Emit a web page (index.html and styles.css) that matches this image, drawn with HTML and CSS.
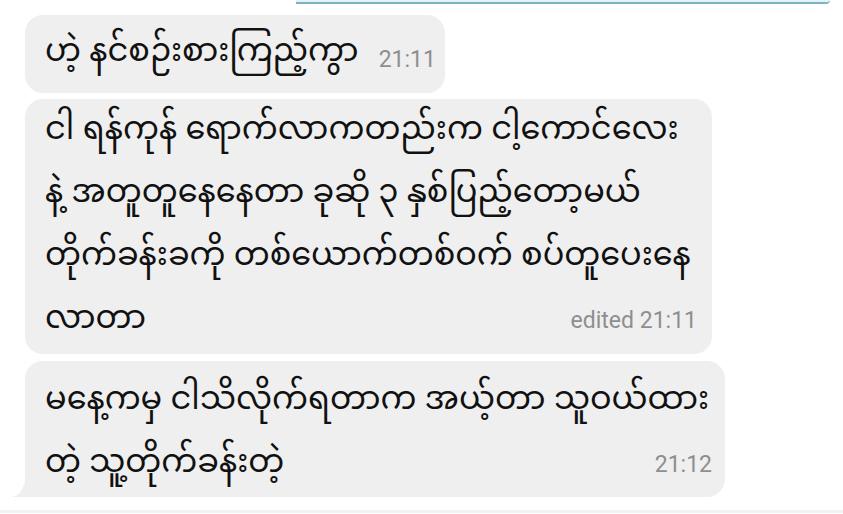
FILE: index.html
```html
<!DOCTYPE html>
<html lang="my">

<head>
    <meta charset="UTF-8">
    <meta name="viewport" content="width=device-width, initial-scale=1.0">
    <title>Chat</title>
    <link rel="stylesheet" href="styles.css">
</head>

<body>
    <div class="chat">
        <div class="sent-edge"></div>

        <div class="bubble short">
            <span class="text">ဟဲ့ နင်စဉ်းစားကြည့်ကွာ</span>
            <span class="time">21:11</span>
        </div>

        <div class="bubble long">
            ငါ ရန်ကုန် ရောက်လာကတည်းက ငါ့ကောင်လေး<br>
            နဲ့ အတူတူနေနေတာ ခုဆို ၃ နှစ်ပြည့်တော့မယ်<br>
            တိုက်ခန်းခကို တစ်ယောက်တစ်ဝက် စပ်တူပေးနေ<br>
            လာတာ <span class="time">edited 21:11</span>
        </div>

        <div class="bubble long last">
            မနေ့ကမှ ငါသိလိုက်ရတာက အယ့်တာ သူဝယ်ထား<br>
            တဲ့ သူ့တိုက်ခန်းတဲ့ <span class="time">21:12</span>
        </div>

        <div class="bottom-line"></div>
    </div>
</body>

</html>
```

FILE: styles.css
```css
body {
    margin: 0;
    background-color: #ffffff;
    font-family: "Noto Sans Myanmar", "Padauk", "Myanmar Text", "Noto Sans", sans-serif;
    width: 843px;
    height: 514px;
    overflow: hidden;
}

.chat {
    display: flex;
    flex-direction: column;
    align-items: flex-start;
    padding-left: 25px;
}

.sent-edge {
    margin-left: 271px;
    width: 534px;
    height: 2px;
    background-color: #e4f3f6;
    border-bottom: 2px solid #7fb2c2;
    border-bottom-right-radius: 6px;
}

.bubble {
    position: relative;
    background-color: #efefef;
    border-radius: 18px;
    color: #111111;
    font-size: 32px;
    box-sizing: border-box;
    white-space: nowrap;
}

.short {
    display: flex;
    align-items: center;
    margin-top: 11px;
    width: 420px;
    height: 78px;
    padding: 0 14px 0 20px;
}

.short .time {
    margin-left: 20px;
    margin-top: 12px;
}

.long {
    margin-top: 6px;
    width: 687px;
    padding: 2px 15px 1px 20px;
    line-height: 63px;
}

.long .time {
    float: right;
    margin-top: 18px;
}

.last {
    margin-top: 7px;
    width: 700px;
    padding: 10px 13px 0 20px;
    border-bottom-left-radius: 0;
}

.last::before {
    content: "";
    position: absolute;
    left: -13px;
    bottom: 0;
    width: 14px;
    height: 24px;
    background: radial-gradient(ellipse 14px 24px at 0 0, transparent 97%, #efefef 100%);
}

.time {
    font-family: Roboto, "Liberation Sans", sans-serif;
    font-size: 23px;
    line-height: 26px;
    color: #8e8e8e;
}

.bottom-line {
    margin-top: 13px;
    margin-left: -25px;
    width: 843px;
    height: 3px;
    background-color: #f2f2f2;
}
```
